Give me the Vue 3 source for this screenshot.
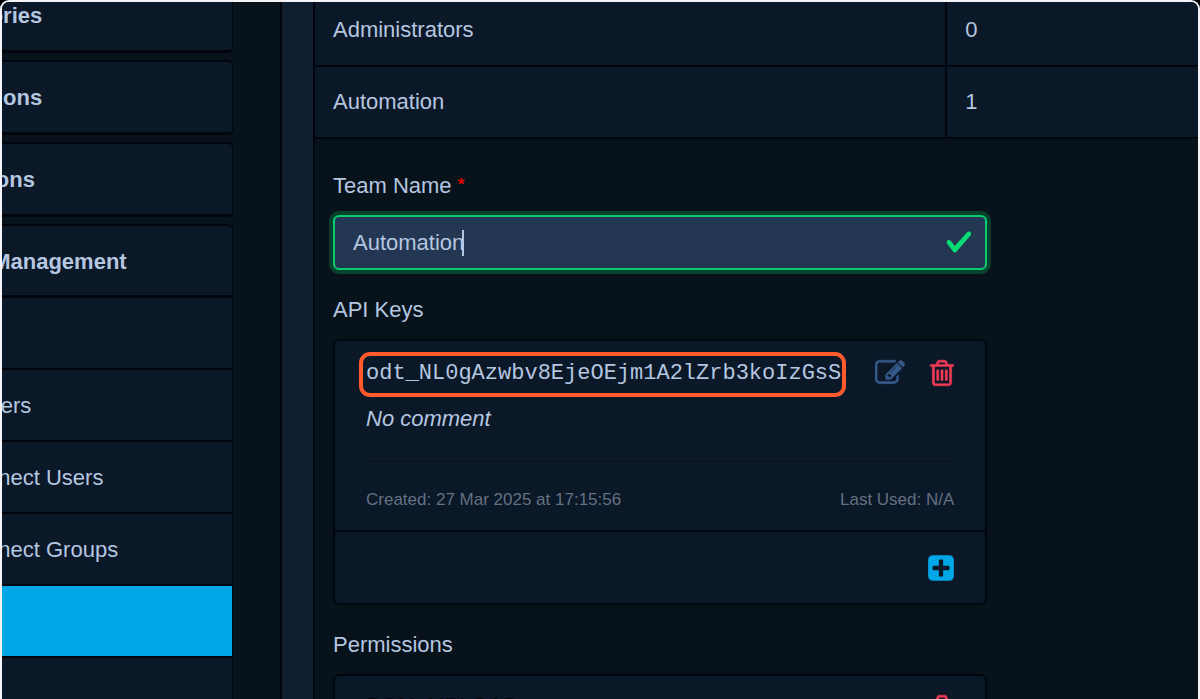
<script setup>
import { ref } from 'vue'

const sections = ['Repositories', 'Notifications', 'Integrations']
const accessItems = [
  { label: 'LDAP Users' },
  { label: 'Managed Users' },
  { label: 'OpenID Connect Users' },
  { label: 'OpenID Connect Groups' },
  { label: 'Teams', active: true },
  { label: 'Permissions' },
]
const teams = [
  { name: 'Administrators', keys: 0 },
  { name: 'Automation', keys: 1 },
]
const teamName = ref('Automation')

const trashPath =
  'M704 736v576q0 14-9 23t-23 9h-64q-14 0-23-9t-9-23v-576q0-14 9-23t23-9h64q14 0 23 9t9 23zm256 0v576q0 14-9 23t-23 9h-64q-14 0-23-9t-9-23v-576q0-14 9-23t23-9h64q14 0 23 9t9 23zm256 0v576q0 14-9 23t-23 9h-64q-14 0-23-9t-9-23v-576q0-14 9-23t23-9h64q14 0 23 9t9 23zm128 724v-948h-896v948q0 22 7 40.5t14.5 27 10.5 8.5h832q3 0 10.5-8.5t14.5-27 7-40.5zm-672-1076h448l-48-117q-7-9-17-11h-317q-10 2-17 11zm928 32v64q0 14-9 23t-23 9h-96v948q0 83-47 143.5t-113 60.5h-832q-66 0-113-58.5t-47-141.5v-952h-96q-14 0-23-9t-9-23v-64q0-14 9-23t23-9h309l70-167q15-37 54-63t79-26h320q40 0 79 26t54 63l70 167h309q14 0 23 9t9 23z'
const editPath =
  'M888 1184l116-116-152-152-116 116v56h96v96h56zm440-720q-16-16-33 1l-350 350q-17 17-1 33t33-1l350-350q17-17 1-33zm80 594v190q0 119-84.5 203.5t-203.5 84.5h-832q-119 0-203.5-84.5t-84.5-203.5v-832q0-119 84.5-203.5t203.5-84.5h832q63 0 117 25 15 7 18 23 3 17-9 29l-49 49q-14 14-32 8-23-6-45-6h-832q-66 0-113 47t-47 113v832q0 66 47 113t113 47h832q66 0 113-47t47-113v-126q0-13 9-22l64-64q15-15 35-7t20 29zm-96-738l288 288-672 672h-288v-288zm444 132l-92 92-288-288 92-92q28-28 68-28t68 28l152 152q28 28 28 68t-28 68z'
const plusPath =
  'M1408 960v-128q0-26-19-45t-45-19h-320v-320q0-26-19-45t-45-19h-128q-26 0-45 19t-19 45v320h-320q-26 0-45 19t-19 45v128q0 26 19 45t45 19h320v320q0 26 19 45t45 19h128q26 0 45-19t19-45v-320h320q26 0 45-19t19-45zm256-544v960q0 119-84.5 203.5t-203.5 84.5h-960q-119 0-203.5-84.5t-84.5-203.5v-960q0-119 84.5-203.5t203.5-84.5h960q119 0 203.5 84.5t84.5 203.5z'
</script>

<template>
  <div class="frame">
    <nav class="sidebar" aria-label="Administration">
      <a v-for="s in sections" :key="s" href="#" class="section">{{ s }}</a>
      <div class="group">
        <a href="#" class="section group-head">Access Management</a>
        <a
          v-for="i in accessItems"
          :key="i.label"
          href="#"
          class="sub"
          :class="{ active: i.active }"
          >{{ i.label }}</a
        >
      </div>
    </nav>

    <div class="band"></div>

    <main class="main">
      <table class="teams">
        <tbody>
          <tr v-for="t in teams" :key="t.name">
            <td class="name">{{ t.name }}</td>
            <td>{{ t.keys }}</td>
          </tr>
        </tbody>
      </table>

      <form class="form" @submit.prevent>
        <label class="label" for="team-name">Team Name <sup class="req">*</sup></label>
        <div class="field">
          <input id="team-name" v-model="teamName" type="text" autocomplete="off" spellcheck="false" />
          <span class="caret"></span>
          <svg class="check" viewBox="0 0 8 8" aria-hidden="true">
            <path d="M2.3 6.73L.6 4.53c-.4-1.04.46-1.4 1.1-.8l1.1 1.4 3.4-3.8c.6-.63 1.6-.27 1.2.7l-4 4.6c-.43.5-.8.4-1.1.1z" />
          </svg>
        </div>

        <div class="label">API Keys</div>
        <div class="card">
          <div class="key">
            <div class="row">
              <code class="code">odt_NL0gAzwbv8EjeOEjm1A2lZrb3koIzGsS<span class="marker"></span></code>
              <div class="actions">
                <button type="button" class="icon edit" aria-label="Edit comment">
                  <svg viewBox="0 0 1792 1792"><path :d="editPath" /></svg>
                </button>
                <button type="button" class="icon trash" aria-label="Delete key">
                  <svg viewBox="0 0 1792 1792"><path :d="trashPath" /></svg>
                </button>
              </div>
            </div>
            <p class="comment">No comment</p>
            <div class="meta">
              <span>Created: 27 Mar 2025 at 17:15:56</span>
              <span>Last Used: N/A</span>
            </div>
          </div>
          <div class="add">
            <button type="button" class="icon plus" aria-label="Add key">
              <svg viewBox="0 0 1792 1792"><path :d="plusPath" /></svg>
            </button>
          </div>
        </div>

        <div class="label">Permissions</div>
        <div class="card">
          <div class="key">
            <div class="row">
              <a href="#" class="perm">BOM_UPLOAD</a>
              <button type="button" class="icon trash" aria-label="Remove permission">
                <svg viewBox="0 0 1792 1792"><path :d="trashPath" /></svg>
              </button>
            </div>
          </div>
        </div>
      </form>
    </main>
  </div>
</template>

<style>
html,
body {
  margin: 0;
  background: #000;
  overflow: hidden;
}
</style>

<style scoped>
* {
  box-sizing: border-box;
}
.frame {
  display: flex;
  height: 100vh;
  overflow: hidden;
  border: 2px solid #f4f4f9;
  border-bottom: 0;
  border-radius: 9px 9px 0 0;
  background: #07121b;
  color: #b5c6e0;
  font-family: 'Liberation Sans', Arial, sans-serif;
  font-size: 22px;
  line-height: 32px;
}
a {
  color: inherit;
  text-decoration: none;
}
.sidebar {
  flex: none;
  width: 373px;
  margin: -24px 47px 0 -142px;
}
.section {
  display: block;
  height: 75px;
  margin-bottom: 7px;
  padding: 20px 0 0 48px;
  background: #0a1827;
  border: 1px solid #01060e;
  border-width: 2px 1px 3px;
  border-radius: 5px;
  font-weight: bold;
}
.group {
  border-right: 1px solid #01060e;
}
.group-head {
  height: 74px;
  margin: 0;
  border-right: 0;
  border-radius: 5px 5px 0 0;
}
.sub {
  display: block;
  padding: 20px 0 18px 16px;
  background: #0a1827;
  border-bottom: 2px solid #01060e;
}
.sub.active {
  background: #00a7e7;
  color: #fff;
}
.band {
  flex: none;
  width: 35px;
  background: #111e30;
  border: solid #01060e;
  border-width: 0 2px;
}
.main {
  flex: 1;
  min-width: 0;
}
.teams {
  width: 100%;
  margin-top: -8px;
  border-collapse: collapse;
  table-layout: fixed;
}
.teams td {
  height: 72px;
  padding: 0 18px;
  background: #0a1827;
  border-bottom: 2px solid #01060e;
}
.teams .name {
  width: 71.5%;
  border-right: 2px solid #01060e;
}
.form {
  width: 74.1%;
  margin-left: 18px;
  padding-top: 31px;
}
.label {
  display: block;
  margin-bottom: 13px;
}
.req {
  color: #e00000;
  font-size: 17px;
  font-weight: bold;
  line-height: 1;
  vertical-align: 3px;
}
.field {
  position: relative;
  margin-bottom: 24px;
}
input {
  display: block;
  width: 100%;
  height: 55px;
  padding: 0 56px 0 18px;
  border: 2px solid #0ccb6c;
  border-radius: 6px;
  background: #233753;
  box-shadow: 0 0 0 4px #05432f;
  color: inherit;
  font: inherit;
  outline: none;
}
.caret {
  position: absolute;
  top: 15px;
  left: 129px;
  width: 2px;
  height: 26px;
  background: #b5c6e0;
}
.check {
  position: absolute;
  top: 13px;
  right: 14px;
  width: 28px;
  height: 28px;
  fill: #08db74;
}
.card {
  margin-bottom: 24px;
  border: 2px solid #01060e;
  border-radius: 6px;
  background: #0a1827;
}
.key {
  padding: 17px 31px 18px;
}
.row {
  display: flex;
  align-items: flex-start;
  justify-content: space-between;
}
.code {
  position: relative;
  font-family: 'Liberation Mono', 'Courier New', monospace;
}
.marker {
  position: absolute;
  inset: -6px -5px -7px -7px;
  border: 4px solid #ff5a2c;
  border-radius: 11px;
}
.actions {
  display: flex;
  gap: 22px;
}
.icon {
  display: block;
  padding: 0;
  border: 0;
  background: none;
}
.icon svg {
  display: block;
  width: 30px;
  height: 30px;
  fill: currentColor;
}
.edit {
  color: #36598b;
}
.trash {
  margin-right: -3px;
  color: #f43b56;
}
.edit svg,
.trash svg {
  stroke: currentColor;
  stroke-width: 30;
}
.plus {
  margin-right: -2px;
  color: #00a7e7;
}
.comment {
  margin: 13px 0 26px;
  font-style: italic;
}
.meta {
  display: flex;
  justify-content: space-between;
  padding-top: 26px;
  border-top: 1px solid #06111c;
  color: #647183;
  font-size: 17px;
  line-height: 24px;
}
.add {
  display: flex;
  align-items: center;
  justify-content: flex-end;
  height: 73px;
  padding: 0 31px;
  border-top: 2px solid #01060e;
}
.perm {
  color: #010509;
  line-height: 26px;
}
</style>
